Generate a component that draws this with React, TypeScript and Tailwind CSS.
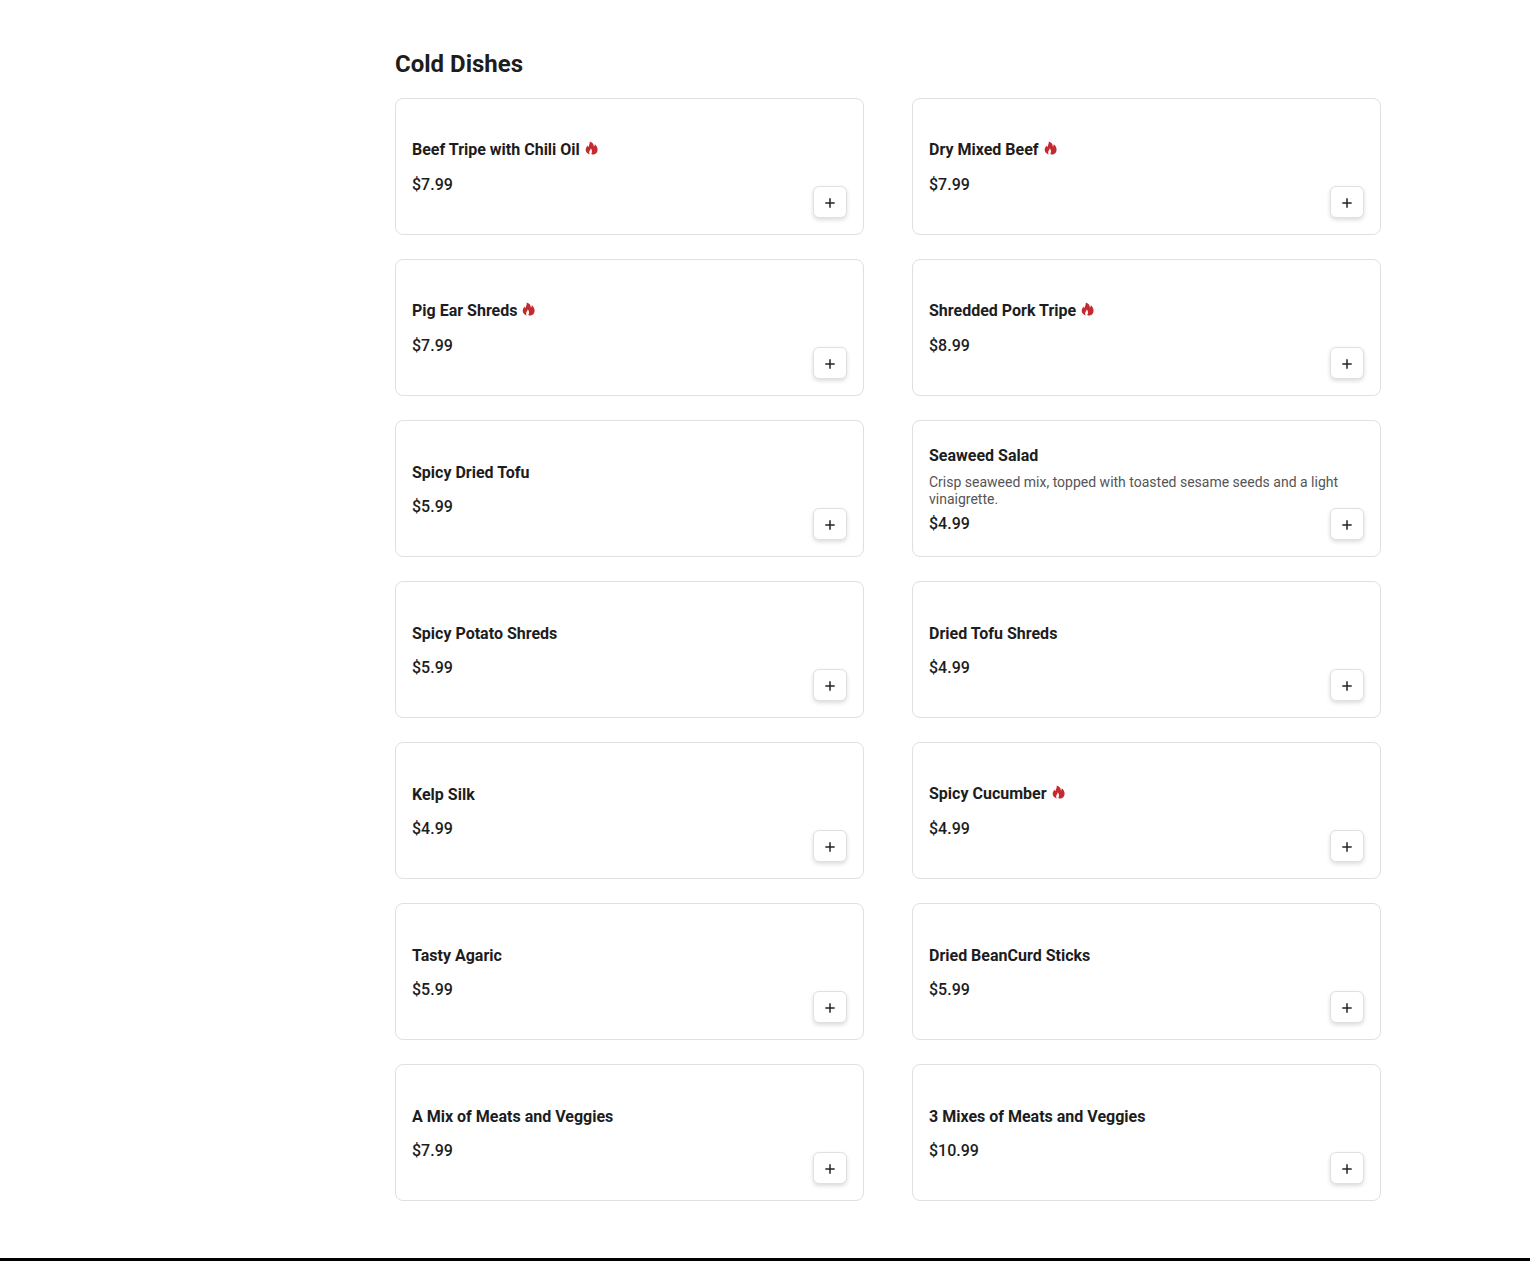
type MenuItem = {
  name: string
  price: string
  description?: string
  spicy?: boolean
}

const coldDishes: MenuItem[] = [
  { name: 'Beef Tripe with Chili Oil', price: '$7.99', spicy: true },
  { name: 'Dry Mixed Beef', price: '$7.99', spicy: true },
  { name: 'Pig Ear Shreds', price: '$7.99', spicy: true },
  { name: 'Shredded Pork Tripe', price: '$8.99', spicy: true },
  { name: 'Spicy Dried Tofu', price: '$5.99' },
  {
    name: 'Seaweed Salad',
    price: '$4.99',
    description: 'Crisp seaweed mix, topped with toasted sesame seeds and a light vinaigrette.',
  },
  { name: 'Spicy Potato Shreds', price: '$5.99' },
  { name: 'Dried Tofu Shreds', price: '$4.99' },
  { name: 'Kelp Silk', price: '$4.99' },
  { name: 'Spicy Cucumber', price: '$4.99', spicy: true },
  { name: 'Tasty Agaric', price: '$5.99' },
  { name: 'Dried BeanCurd Sticks', price: '$5.99' },
  { name: 'A Mix of Meats and Veggies', price: '$7.99' },
  { name: '3 Mixes of Meats and Veggies', price: '$10.99' },
]

function FlameIcon() {
  return (
    <svg viewBox="0 0 16 16" className="size-4 shrink-0" fill="#c42b30" role="img" aria-label="Spicy">
      <path d="M5.7 1.5C8.2 2.2 9.8 4 9.9 6.5C10.5 6 10.8 5.3 10.7 4.2C12.6 5.5 13.6 7.5 13.6 9.7C13.6 12.2 12 14 9.6 14.4C8.7 14.5 7.9 14.3 7.3 13.9C8.4 12.2 8.3 10.1 6.8 8.2C6.9 9.8 5.2 10.5 5.1 12.2C5.1 13 5.4 13.8 5.9 14.4C3.4 13.9 1.7 12.2 1.7 9.8C1.7 8 2.6 6.8 3.7 5.7C3.8 6.4 4.1 6.8 4.6 7.1C4.6 5.1 6.2 3.8 5.7 1.5Z" />
    </svg>
  )
}

function PlusIcon() {
  return (
    <svg viewBox="0 0 16 16" className="size-4" fill="none" stroke="#252525" strokeWidth="1.5" aria-hidden="true">
      <path d="M8 3.3v9.4M3.3 8h9.4" />
    </svg>
  )
}

function MenuCard({ item }: { item: MenuItem }) {
  return (
    <li className="flex h-[137px] gap-2 rounded-lg border border-[#e0e0e0] bg-white p-4">
      <div className="flex min-w-0 flex-1 flex-col justify-center">
        <div className={item.spicy ? 'mb-2 flex h-[21px] items-start gap-1' : 'mb-2'}>
          <h3 className="text-base leading-5 font-bold">{item.name}</h3>
          {item.spicy && <FlameIcon />}
        </div>
        {item.description && (
          <p className="-mr-10 text-sm leading-[17px] text-[#555555]">{item.description}</p>
        )}
        <p className="mt-2 text-base leading-4 font-medium">{item.price}</p>
      </div>
      <button
        type="button"
        aria-label={`Add ${item.name}`}
        className="flex h-8 w-[34px] items-center justify-center self-end rounded-md border border-[#e0e0e0] bg-white pt-0.5 shadow-[0_2px_4px_rgba(0,0,0,0.14)]"
      >
        <PlusIcon />
      </button>
    </li>
  )
}

export default function App() {
  return (
    <div className="bg-white font-[Roboto,sans-serif] text-[#1d1d1d]">
      <main className="pt-12 pr-[149px] pb-[57px] pl-[395px]">
        <h2 className="mb-[18px] text-2xl leading-8 font-bold">Cold Dishes</h2>
        <ul className="grid grid-cols-2 gap-x-12 gap-y-6">
          {coldDishes.map((item) => (
            <MenuCard key={item.name} item={item} />
          ))}
        </ul>
      </main>
      <footer className="h-[3px] bg-black" />
    </div>
  )
}
